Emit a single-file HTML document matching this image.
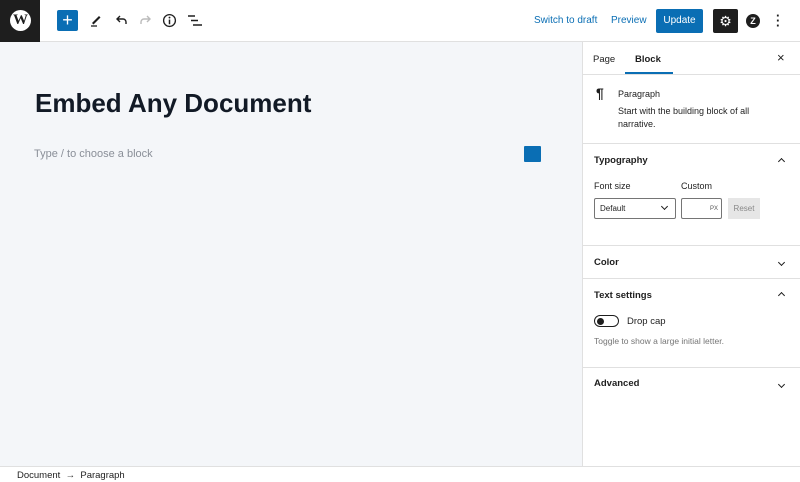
<!DOCTYPE html>
<html><head><style>
*{box-sizing:border-box;margin:0;padding:0}
body{width:800px;height:482px;overflow:hidden;font-family:"Liberation Sans",sans-serif;background:#fff;position:relative;color:#1e1e1e}
.a{position:absolute}
.top{left:0;top:0;width:800px;height:42px;border-bottom:1px solid #e0e0e0;background:#fff}
.canvas{left:0;top:42px;width:582px;height:424px;background:#f4f6f9}
.side{left:582px;top:42px;width:218px;height:424px;background:#fff;border-left:1px solid #e0e0e0}
.foot{left:0;top:466px;width:800px;height:16px;border-top:1px solid #e0e0e0;background:#fff;font-size:9.5px}
.hr{position:absolute;left:0;width:218px;height:1px;background:#e0e0e0}
.h{position:absolute;left:11px;font-size:9.5px;font-weight:bold}
.chev{position:absolute;right:16px;width:5px;height:5px;border-left:1.5px solid #1e1e1e;border-top:1.5px solid #1e1e1e}
.up{transform:rotate(45deg)}
.dn{transform:rotate(225deg)}
</style></head><body>
<div class="a top">
 <div class="a" style="left:0;top:0;width:40px;height:42px;background:#1e1e1e"></div>
 <div class="a" style="left:10px;top:10px;width:21px;height:21px;border-radius:50%;background:#fff;color:#1e1e1e;font:bold 15px 'Liberation Serif',serif;text-align:center;line-height:21px">W</div>
 <div class="a" style="left:57px;top:10px;width:21px;height:21px;background:#0a6eb4;border-radius:2px;color:#fff;font-size:18px;text-align:center;line-height:20px">+</div>
 <svg class="a" style="left:88px;top:12px" width="16" height="16" viewBox="0 0 16 16"><path d="M4 11 L11 4 L12.5 5.5 L5.5 12.5 Z" fill="#1e1e1e"/><path d="M3 14h6" stroke="#1e1e1e" stroke-width="1.3"/></svg>
 <svg class="a" style="left:113px;top:12px" width="16" height="16" viewBox="0 0 16 16"><path d="M13 12 V10 a3 3 0 0 0 -3 -3 H4 M7 4 L4 7 L7 10" stroke="#1e1e1e" stroke-width="1.4" fill="none"/></svg>
 <svg class="a" style="left:138px;top:12px" width="16" height="16" viewBox="0 0 16 16"><path d="M3 12 V10 a3 3 0 0 1 3 -3 H12 M9 4 L12 7 L9 10" stroke="#bbb" stroke-width="1.4" fill="none"/></svg>
 <svg class="a" style="left:162px;top:13px" width="15" height="15" viewBox="0 0 16 16"><circle cx="8" cy="8" r="6.3" stroke="#1e1e1e" stroke-width="1.4" fill="none"/><path d="M8 7v5" stroke="#1e1e1e" stroke-width="1.6"/><circle cx="8" cy="4.8" r="1" fill="#1e1e1e"/></svg>
 <svg class="a" style="left:187px;top:13px" width="16" height="15" viewBox="0 0 16 15"><path d="M1 3h7M4 7.5h7M6 12h9" stroke="#1e1e1e" stroke-width="1.5"/></svg>
 <div class="a" style="left:534px;top:15px;font-size:10px;color:#0a6eb4">Switch to draft</div>
 <div class="a" style="left:611px;top:15px;font-size:10px;color:#0a6eb4">Preview</div>
 <div class="a" style="left:656px;top:9px;width:47px;height:24px;background:#0a6eb4;border-radius:2px;color:#fff;font-size:10px;text-align:center;padding-top:6px">Update</div>
 <div class="a" style="left:713px;top:9px;width:25px;height:24px;background:#1e1e1e;border-radius:2px;color:#fff;font-size:14px;text-align:center;line-height:24px">⚙</div>
 <div class="a" style="left:746px;top:14px;width:14px;height:14px;border-radius:50%;background:#1e1e1e;color:#fff;font-size:9px;font-weight:bold;text-align:center;line-height:14px">Z</div>
 <div class="a" style="left:776px;top:13px;font-size:13px;line-height:5px;font-weight:bold">·<br>·<br>·</div>
</div>
<div class="a canvas">
 <div class="a" style="left:35px;top:46px;font-size:26px;font-weight:bold;color:#121a26">Embed Any Document</div>
 <div class="a" style="left:34px;top:106px;font-size:11px;color:#8a8f98">Type / to choose a block</div>
 <div class="a" style="left:524px;top:104px;width:17px;height:16px;background:#0a6eb4;border-radius:1px"></div>
</div>
<div class="a side">
 <div class="a" style="left:10px;top:12px;font-size:9.5px">Page</div>
 <div class="a" style="left:52px;top:12px;font-size:9.5px;font-weight:bold">Block</div>
 <div class="a" style="left:42px;top:30px;width:48px;height:2px;background:#0a6eb4"></div>
 <div class="a" style="left:194px;top:8px;font-size:13px">×</div>
 <div class="hr" style="top:32px"></div>
 <div class="a" style="left:13px;top:43px;font-size:14px;font-weight:bold">¶</div>
 <div class="a" style="left:35px;top:47px;font-size:9px">Paragraph</div>
 <div class="a" style="left:35px;top:63px;font-size:9px;line-height:13px;width:165px">Start with the building block of all narrative.</div>
 <div class="hr" style="top:101px"></div>
 <div class="h" style="top:113px">Typography</div><div class="chev up" style="top:117px"></div>
 <div class="a" style="left:11px;top:139px;font-size:9px">Font size</div>
 <div class="a" style="left:98px;top:139px;font-size:9px">Custom</div>
 <div class="a" style="left:11px;top:156px;width:82px;height:21px;border:1px solid #757575;border-radius:2px;font-size:8px;padding:5px 5px">Default</div>
 <div class="chev dn" style="left:79px;top:162px;right:auto"></div>
 <div class="a" style="left:98px;top:156px;width:41px;height:21px;border:1px solid #757575;border-radius:2px;font-size:6px;padding:7px 3px;text-align:right;color:#555">PX</div>
 <div class="a" style="left:145px;top:156px;width:32px;height:21px;background:#e6e6e6;font-size:8px;color:#888;text-align:center;line-height:21px">Reset</div>
 <div class="hr" style="top:203px"></div>
 <div class="h" style="top:215px">Color</div><div class="chev dn" style="top:218px"></div>
 <div class="hr" style="top:236px"></div>
 <div class="h" style="top:248px">Text settings</div><div class="chev up" style="top:251px"></div>
 <div class="a" style="left:11px;top:273px;width:25px;height:12px;border:1px solid #1e1e1e;border-radius:6px"><div class="a" style="left:2px;top:1.5px;width:7px;height:7px;border-radius:50%;background:#1e1e1e"></div></div>
 <div class="a" style="left:44px;top:274px;font-size:9.5px">Drop cap</div>
 <div class="a" style="left:11px;top:294px;font-size:8.5px;color:#757575">Toggle to show a large initial letter.</div>
 <div class="hr" style="top:325px"></div>
 <div class="h" style="top:336px">Advanced</div><div class="chev dn" style="top:340px"></div>
</div>
<div class="a foot"><span class="a" style="left:17px;top:3px">Document &nbsp;→&nbsp; Paragraph</span></div>
</body></html>
